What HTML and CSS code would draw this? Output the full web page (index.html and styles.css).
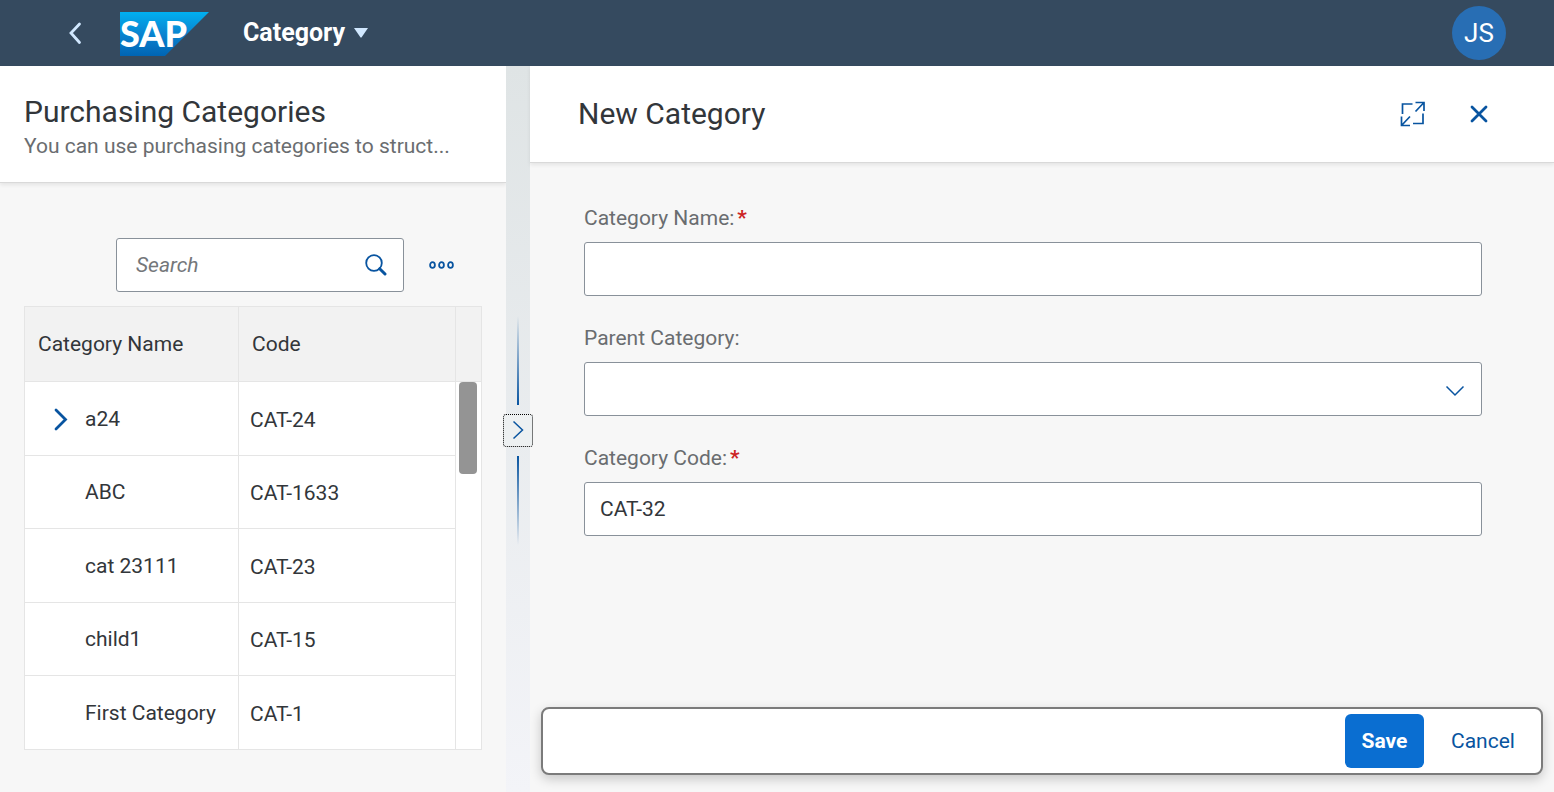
FILE: index.html
```
<!DOCTYPE html>
<html lang="en">
<head>
<meta charset="utf-8">
<title>Category</title>
<link rel="stylesheet" href="styles.css">
</head>
<body>
<header class="shell">
  <button class="back" aria-label="Back"><svg width="16" height="24" viewBox="0 0 16 24"><path d="M12.500 3 4 12 12.500 21.500" fill="none" stroke="#d1e8ff" stroke-width="2.800" stroke-linecap="round"/></svg></button>
  <svg class="logo" width="89" height="44" viewBox="0 0 89 44" role="img" aria-label="SAP">
    <defs><linearGradient id="blue" x1="0" y1="0" x2="0" y2="1"><stop offset="0" stop-color="#00b0f0"/><stop offset=".5" stop-color="#0a84d0"/><stop offset="1" stop-color="#0064b4"/></linearGradient></defs>
    <path d="M0 0H89L45 44H0z" fill="url(#blue)"/>
    <text class="logo-text" x="0" y="35">SAP</text>
  </svg>
  <button class="app-title">Category<svg width="14" height="10" viewBox="0 0 14 10"><path d="M0 0H14L7.500 9.500H6.500z" fill="#d1e8ff"/></svg></button>
  <button class="avatar">JS</button>
</header>
<main class="columns">
  <section class="list">
    <div class="list-head">
      <h1 class="title">Purchasing Categories</h1>
      <p class="subtitle">You can use purchasing categories to struct...</p>
    </div>
    <div class="toolbar">
      <div class="search">
        <input class="search-input" type="text" placeholder="Search" aria-label="Search">
        <button class="search-button" aria-label="Start search"><svg width="22" height="22" viewBox="0 0 22 22" fill="none" stroke="#0854a0"><circle cx="9" cy="9" r="7.800" stroke-width="1.800"/><path d="M14.700 14.700 20 20" stroke-width="3" stroke-linecap="round"/></svg></button>
      </div>
      <button class="more" aria-label="More"><svg width="26" height="8" viewBox="0 0 26 8" fill="none" stroke="#0854a0" stroke-width="1.800"><ellipse cx="3.500" cy="4" rx="2.400" ry="2.900"/><ellipse cx="12.500" cy="4" rx="2.400" ry="2.900"/><ellipse cx="21.500" cy="4" rx="2.400" ry="2.900"/></svg></button>
    </div>
    <table class="table">
      <colgroup><col class="col-name"><col class="col-code"><col class="col-scroll"></colgroup>
      <thead><tr><th>Category Name</th><th>Code</th><th></th></tr></thead>
      <tbody>
        <tr><td class="name"><span class="tree"><button class="expand" aria-label="Expand a24"><svg width="14" height="24" viewBox="0 0 14 24"><path d="M2 3 11.500 12.500 2 22" fill="none" stroke="#0854a0" stroke-width="2.800" stroke-linecap="round"/></svg></button>a24</span></td><td class="code">CAT-24</td><td class="scroll" rowspan="5"><div class="thumb"></div></td></tr>
        <tr><td class="name">ABC</td><td class="code">CAT-1633</td></tr>
        <tr><td class="name">cat 23111</td><td class="code">CAT-23</td></tr>
        <tr><td class="name">child1</td><td class="code">CAT-15</td></tr>
        <tr><td class="name">First Category</td><td class="code">CAT-1</td></tr>
      </tbody>
    </table>
  </section>
  <div class="splitter">
    <div class="line line-up"></div>
    <button class="grip" aria-label="Expand list"><svg width="12" height="20" viewBox="0 0 12 20"><path d="M1.500 1.500 10.500 10 1.500 18.500" fill="none" stroke="#0854a0" stroke-width="1.500"/></svg></button>
    <div class="line line-down"></div>
  </div>
  <section class="detail">
    <div class="detail-head">
      <h2 class="title">New Category</h2>
      <button class="icon-button" aria-label="Full screen"><svg width="26" height="26" viewBox="0 0 26 26" fill="none" stroke="#0854a0" stroke-width="1.700"><path d="M2.500 13V3H12.500M15.500 1.500H24V10M24 1.500 15.500 10.500M1.500 15.500V24.500H10M1.500 24.500 10 15.500M23 12.500V22.500H13"/></svg></button>
      <button class="icon-button" aria-label="Close"><svg width="18" height="18" viewBox="0 0 18 18"><path d="M2 2 16 16M16 2 2 16" stroke="#0854a0" stroke-width="2.800" stroke-linecap="round"/></svg></button>
    </div>
    <form class="form">
      <div class="field">
        <label class="label" for="name">Category Name:<span class="required">*</span></label>
        <input class="input" id="name" type="text">
      </div>
      <div class="field">
        <label class="label" for="parent">Parent Category:</label>
        <div class="select-wrap">
          <select class="input select" id="parent"><option></option></select>
          <svg class="arrow" width="20" height="12" viewBox="0 0 20 12"><path d="M1.500 1.500 10 10 18.500 1.500" fill="none" stroke="#0854a0" stroke-width="1.500"/></svg>
        </div>
      </div>
      <div class="field">
        <label class="label" for="code">Category Code:<span class="required">*</span></label>
        <input class="input" id="code" type="text" value="CAT-32">
      </div>
    </form>
    <footer class="footer">
      <button class="save">Save</button>
      <button class="cancel">Cancel</button>
    </footer>
  </section>
</main>
</body>
</html>
```
FILE: styles.css
```
* { box-sizing: border-box; }
body {
  margin: 0;
  min-height: 100vh;
  display: flex;
  flex-direction: column;
  background: #f7f7f7;
  color: #32363a;
  font-family: Roboto, "Liberation Sans", sans-serif;
  font-size: 21px;
}
button, input, select { font: inherit; color: inherit; }
button { border: 0; padding: 0; background: none; display: flex; align-items: center; justify-content: center; }
svg { display: block; flex: none; }
h1, h2, p { margin: 0; }

.shell {
  display: flex;
  align-items: center;
  height: 66px;
  padding: 0 48px;
  background: #354a5f;
}
.back { width: 54px; height: 54px; }
.logo { margin: 1px 0 0 18px; overflow: visible; }
.logo-text { font-family: Lato, "Open Sans", sans-serif; font-weight: 900; font-size: 36px; fill: #fff; }
.app-title { gap: 9px; margin-left: 34px; color: #fff; font-size: 25px; line-height: 36px; font-weight: 700; }
.avatar {
  width: 54px;
  height: 54px;
  margin-left: auto;
  border-radius: 50%;
  background: #286eb4;
  color: #fff;
  font-size: 26px;
}

.columns {
  flex: 1;
  display: grid;
  grid-template-columns: minmax(0, 506fr) 24px minmax(0, 1024fr);
}
.title { font-size: 30px; line-height: 36px; font-weight: 400; }
.list-head {
  padding: 28px 24px 20px;
  background: #fff;
  border-bottom: 1px solid #d9d9d9;
  box-shadow: 0 2px 4px rgba(0, 0, 0, .08);
}
.subtitle {
  line-height: 32px;
  color: #6a6d70;
}
.toolbar {
  display: flex;
  justify-content: flex-end;
  gap: 12px;
  padding: 55px 38px 14px 24px;
}
.search {
  display: flex;
  width: 288px;
  height: 54px;
  background: #fff;
  border: 1px solid #89919a;
  border-radius: 3px;
}
.search-input { flex: 1; min-width: 0; border: 0; padding: 0 19px; background: none; outline: 0; }
.search-input::placeholder { color: #74777a; font-style: italic; opacity: 1; }
.search-button { width: 54px; }
.more { width: 52px; height: 54px; }

.table {
  width: calc(100% - 48px);
  margin: 0 24px;
  table-layout: fixed;
  border-collapse: collapse;
  border: 1px solid #e5e5e5;
  background: #fff;
}
.col-name { width: 214px; }
.col-scroll { width: 26px; }
.table th {
  height: 75px;
  padding: 0 13px;
  background: #f2f2f2;
  border: 1px solid #e5e5e5;
  font-weight: 400;
  text-align: left;
}
.table td { height: 74px; padding: 0; border: 1px solid #e5e5e5; white-space: nowrap; }
.table tr:nth-child(even) td { height: 73px; }
.table .name { padding-left: 60px; }
.table .code { padding: 2px 0 0 11px; }
.tree { display: flex; align-items: center; }
.expand { width: 32px; height: 32px; margin-left: -40px; margin-right: 8px; }
.table .scroll { vertical-align: top; }
.thumb { width: 18px; height: 92px; margin-left: 3px; border-radius: 4px; background: #949494; }

.splitter {
  display: flex;
  flex-direction: column;
  align-items: center;
  justify-content: center;
  gap: 9px;
  padding-top: 2px;
  background: linear-gradient(#dfe4e5, #f3f4f8);
}
.line { width: 2px; height: 89px; }
.line-up { background: linear-gradient(rgba(8, 84, 160, 0), #0854a0); }
.line-down { background: linear-gradient(#0854a0, rgba(8, 84, 160, 0)); }
.grip {
  z-index: 1;
  width: 30px;
  height: 33px;
  margin: 0 -3px;
  background: #edf0f1;
  border: 1px dotted #000;
  border-radius: 3px;
}

.detail { display: flex; flex-direction: column; }
.detail-head {
  display: flex;
  align-items: center;
  gap: 12px;
  height: 97px;
  padding: 0 48px;
  background: #fff;
  border-bottom: 1px solid #d9d9d9;
  box-shadow: 0 2px 4px rgba(0, 0, 0, .08);
}
.detail-head .title { flex: 1; }
.icon-button { width: 54px; height: 54px; }
.form { display: flex; flex-direction: column; gap: 30px; padding: 43px 72px 24px 54px; }
.field { display: flex; flex-direction: column; gap: 12px; }
.label { line-height: 24px; color: #6a6d70; }
.required { margin-left: 3px; color: #cc2424; font-weight: 700; }
.input {
  width: 100%;
  height: 54px;
  padding: 0 15px;
  background: #fff;
  border: 1px solid #89919a;
  border-radius: 3px;
}
.select-wrap { position: relative; }
.select { appearance: none; display: block; }
.arrow { position: absolute; right: 17px; top: 23px; pointer-events: none; }
.footer {
  display: flex;
  justify-content: flex-end;
  gap: 12px;
  margin: auto 11px 17px;
  padding: 5px 11px;
  background: #fff;
  border: 2px solid #7b7b7b;
  border-radius: 8px;
  box-shadow: 0 4px 12px rgba(0, 0, 0, .2);
}
.save { min-width: 79px; height: 54px; border-radius: 6px; background: #0a6ed1; color: #fff; font-weight: 700; }
.cancel { width: 94px; height: 54px; color: #0854a0; }
```
